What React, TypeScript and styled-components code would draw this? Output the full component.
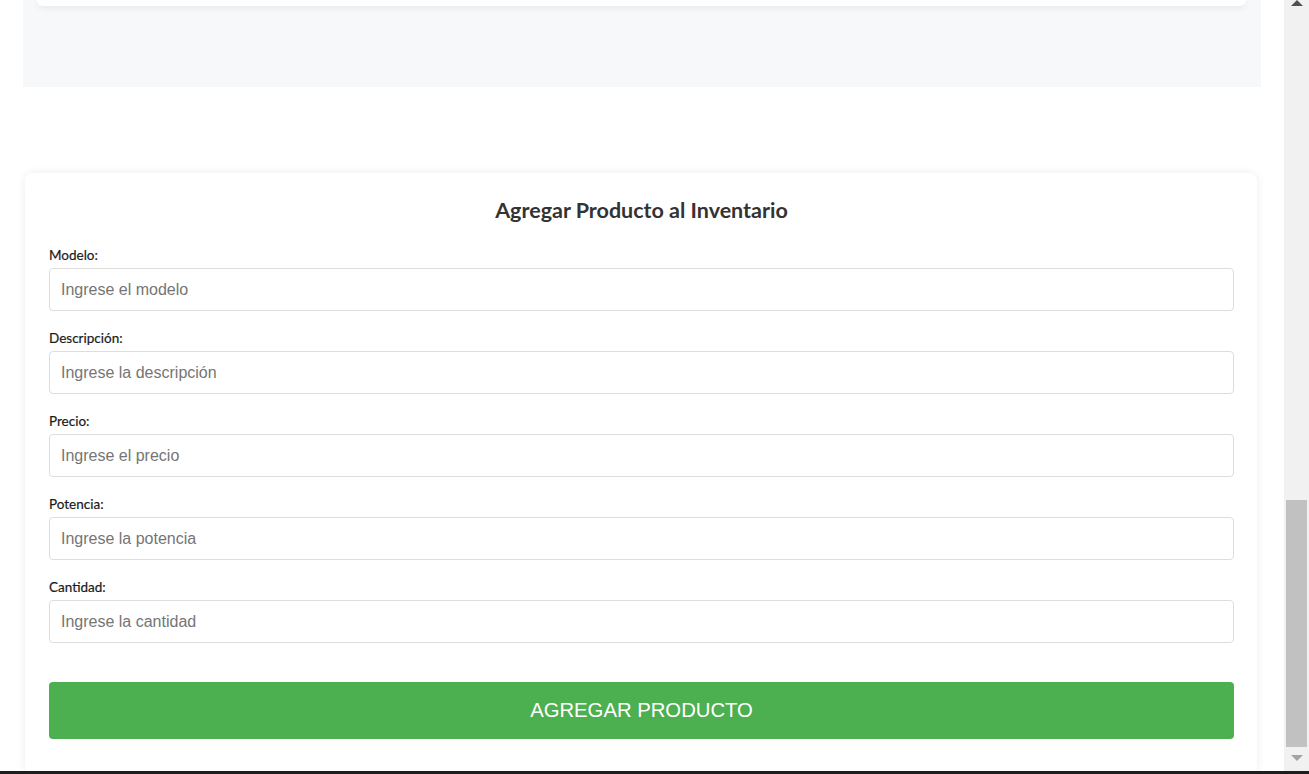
import React from "react";
import styled, { createGlobalStyle } from "styled-components";

const Global = createGlobalStyle`
  html, body { margin: 0; padding: 0; background: #ffffff; overflow: hidden; }
  body { font-family: "Liberation Sans", Arial, sans-serif; }
  * { box-sizing: border-box; }
`;

const Screen = styled.div`
  width: 1309px;
  height: 774px;
  display: flex;
  flex-direction: column;
  overflow: hidden;
`;

const Viewport = styled.div`
  flex: 1;
  display: flex;
  min-height: 0;
`;

const Page = styled.main`
  width: 1284px;
  display: flex;
  flex-direction: column;
  overflow: hidden;
`;

const Panel = styled.section`
  margin-left: 23px;
  width: 1238px;
  height: 87px;
  background: #f7f8fa;
  padding: 0 15px 0 14px;
  flex-shrink: 0;
`;

const PanelCardEdge = styled.div`
  height: 6px;
  background: #ffffff;
  border-radius: 0 0 12px 12px;
  box-shadow: 0 2px 6px rgba(0, 0, 0, 0.07);
`;

const FormCard = styled.form`
  margin: 86px 0 0 25px;
  width: 1232px;
  flex: 1;
  background: #ffffff;
  border-radius: 8px 8px 0 0;
  box-shadow: 0 0 10px rgba(0, 0, 0, 0.08);
  padding: 25px 23px 0 24px;
  display: flex;
  flex-direction: column;
`;

const Title = styled.h2`
  margin: 0 0 23px;
  font-family: Lato, "Noto Sans", sans-serif;
  font-weight: 700;
  font-size: 21.5px;
  line-height: 24px;
  color: #333333;
  text-align: center;
`;

const Field = styled.div`
  display: flex;
  flex-direction: column;
  margin-bottom: 17px;
`;

const Label = styled.label`
  font-family: Lato, "Noto Sans", sans-serif;
  font-size: 13.5px;
  line-height: 20px;
  font-weight: 400;
  color: #1a1a1a;
  margin-bottom: 3px;
  -webkit-text-stroke: 0.2px #1a1a1a;
`;

const Input = styled.input`
  height: 43px;
  width: 100%;
  border: 1px solid #dddddd;
  border-radius: 4px;
  padding: 0 11px;
  font-family: "Liberation Sans", Arial, sans-serif;
  font-size: 16px;
  color: #333333;
  background: #ffffff;
  outline: none;
  &::placeholder { color: #757575; }
`;

const SubmitButton = styled.button`
  margin-top: 22px;
  height: 57px;
  width: 100%;
  border: none;
  border-radius: 4px;
  background: #4caf50;
  color: #ffffff;
  font-family: "Liberation Sans", Arial, sans-serif;
  font-size: 20.3px;
  cursor: pointer;
`;

const Scrollbar = styled.div`
  width: 25px;
  background: #f1f1f1;
  display: flex;
  flex-direction: column;
  align-items: center;
`;

const Arrow = styled.div<{ $up?: boolean; $color: string }>`
  width: 0;
  height: 0;
  border-left: 6px solid transparent;
  border-right: 6px solid transparent;
  ${(p) => (p.$up ? `border-bottom: 6px solid ${p.$color};` : `border-top: 6px solid ${p.$color};`)}
`;

const Thumb = styled.div`
  width: 21px;
  height: 247px;
  margin-top: 494px;
  background: #c1c1c1;
`;

const DownArrowWrap = styled.div`
  margin-top: 8px;
`;

const BottomBar = styled.div`
  height: 3px;
  background: #1e1e1e;
  flex-shrink: 0;
`;

const fields = [
  { label: "Modelo:", placeholder: "Ingrese el modelo" },
  { label: "Descripción:", placeholder: "Ingrese la descripción" },
  { label: "Precio:", placeholder: "Ingrese el precio" },
  { label: "Potencia:", placeholder: "Ingrese la potencia" },
  { label: "Cantidad:", placeholder: "Ingrese la cantidad" },
];

export default function App() {
  return (
    <>
      <Global />
      <Screen>
        <Viewport>
          <Page>
            <Panel>
              <PanelCardEdge />
            </Panel>
            <FormCard onSubmit={(e) => e.preventDefault()}>
              <Title>Agregar Producto al Inventario</Title>
              {fields.map((f, i) => (
                <Field key={i}>
                  <Label htmlFor={`f${i}`}>{f.label}</Label>
                  <Input id={`f${i}`} placeholder={f.placeholder} />
                </Field>
              ))}
              <SubmitButton type="submit">AGREGAR PRODUCTO</SubmitButton>
            </FormCard>
          </Page>
          <Scrollbar>
            <Arrow $up $color="#505050" />
            <Thumb />
            <DownArrowWrap>
              <Arrow $color="#a3a3a3" />
            </DownArrowWrap>
          </Scrollbar>
        </Viewport>
        <BottomBar />
      </Screen>
    </>
  );
}
